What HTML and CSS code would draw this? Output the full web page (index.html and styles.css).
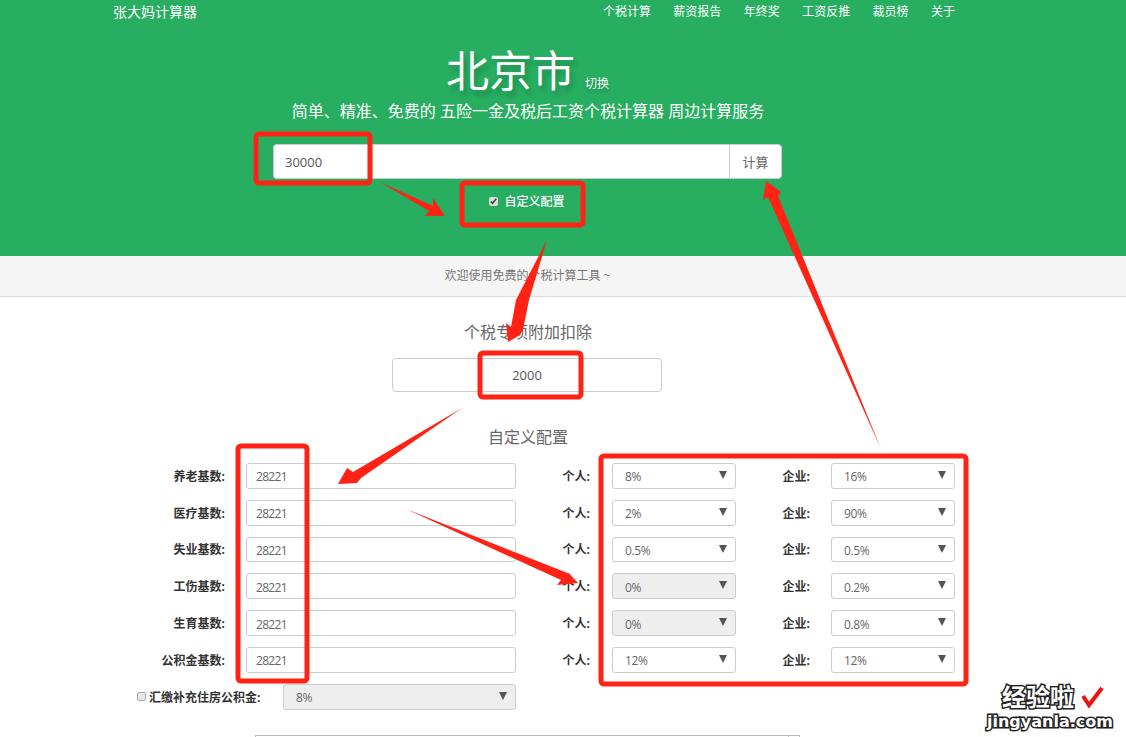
FILE: index.html
```html
<!DOCTYPE html>
<html>
<head>
    <title>张大妈计算器</title>
    <link rel="stylesheet" href="styles.css">
</head>
<body>
    <header class="hero">
        <nav class="nav">
            <a class="brand" href="#">张大妈计算器</a>
            <div class="nav-links">
                <a href="#">个税计算</a>
                <a href="#">薪资报告</a>
                <a href="#">年终奖</a>
                <a href="#">工资反推</a>
                <a href="#">裁员榜</a>
                <a href="#">关于</a>
            </div>
        </nav>
        <div class="city">
            <h1>北京市</h1>
            <a class="switch" href="#">切换</a>
        </div>
        <p class="slogan">简单、精准、免费的 五险一金及税后工资个税计算器 周边计算服务</p>
        <form class="salary">
            <input type="text" value="30000">
            <button type="button">计算</button>
        </form>
        <label class="custom"><input type="checkbox" checked> 自定义配置</label>
    </header>

    <div class="notice">欢迎使用免费的个税计算工具 ~</div>

    <main class="config">
        <h2>个税专项附加扣除</h2>
        <input class="deduct" type="text" value="2000">
        <h2 class="config-title">自定义配置</h2>

        <div class="rows">
            <label>养老基数:</label>
            <input type="text" value="28221">
            <label class="own">个人:</label>
            <div class="sel"><select><option>8%</option></select></div>
            <label>企业:</label>
            <div class="sel"><select><option>16%</option></select></div>

            <label>医疗基数:</label>
            <input type="text" value="28221">
            <label class="own">个人:</label>
            <div class="sel"><select><option>2%</option></select></div>
            <label>企业:</label>
            <div class="sel"><select><option>90%</option></select></div>

            <label>失业基数:</label>
            <input type="text" value="28221">
            <label class="own">个人:</label>
            <div class="sel"><select><option>0.5%</option></select></div>
            <label>企业:</label>
            <div class="sel"><select><option>0.5%</option></select></div>

            <label>工伤基数:</label>
            <input type="text" value="28221">
            <label class="own">个人:</label>
            <div class="sel"><select disabled><option>0%</option></select></div>
            <label>企业:</label>
            <div class="sel"><select><option>0.2%</option></select></div>

            <label>生育基数:</label>
            <input type="text" value="28221">
            <label class="own">个人:</label>
            <div class="sel"><select disabled><option>0%</option></select></div>
            <label>企业:</label>
            <div class="sel"><select><option>0.8%</option></select></div>

            <label>公积金基数:</label>
            <input type="text" value="28221">
            <label class="own">个人:</label>
            <div class="sel"><select><option>12%</option></select></div>
            <label>企业:</label>
            <div class="sel"><select><option>12%</option></select></div>
        </div>

        <div class="extra">
            <label><input type="checkbox"> 汇缴补充住房公积金:</label>
            <div class="sel"><select disabled><option>8%</option></select></div>
        </div>

        <div class="next">
            <span class="next-input"></span>
            <span class="next-btn"></span>
        </div>
    </main>

    <!-- red marks drawn on top of the screenshot -->
    <svg class="marks" width="1126" height="737" viewBox="0 0 1126 737">
        <g class="box">
            <rect x="256" y="134" width="114" height="49" rx="3"/>
            <rect x="462" y="183" width="121" height="42" rx="3"/>
            <rect x="480" y="353" width="101" height="44" rx="3"/>
            <rect x="238" y="446" width="69" height="235" rx="3"/>
            <rect x="601" y="456" width="365" height="228" rx="3"/>
        </g>
        <g class="arrow">
            <polygon points="380,182 433,206 433,198 445,216 425,216 429,211"/>
            <polygon points="547,240 529,300 523,330 520,335 508,342 506,323 511,327 516,300"/>
            <polygon points="462,408 361,478 357,483 338,484 347,468 353,472"/>
            <polygon points="406,509 570,574 564,568 578,583 557,585 561,580"/>
            <polygon points="881,449 778,196 781,192 766,181 763,200 768,197"/>
        </g>
    </svg>

    <div class="stamp">
        <div class="stamp-top">
            <span>经验啦</span>
            <svg width="24" height="24" viewBox="0 0 24 24"><polyline points="2,11 8,20 21,3" fill="none" stroke="#f01010" stroke-width="4"/></svg>
        </div>
        <div class="stamp-url">jingyanla.com</div>
    </div>
</body>
</html>
```

FILE: styles.css
```css
* {
    box-sizing: border-box;
}

html, body {
    height: 737px;
    overflow: hidden;
}

body {
    margin: 0;
    position: relative;
    background-color: #fff;
    color: #333;
    font-family: "Open Sans", "Noto Sans CJK SC", sans-serif;
    font-size: 12px;
}

a {
    color: inherit;
    text-decoration: none;
}

input, select, button {
    font-family: inherit;
}

.hero {
    height: 256px;
    background-color: #27ae60;
    color: #fff;
    text-align: center;
}

.nav {
    display: flex;
    justify-content: space-between;
    height: 24px;
    padding: 3px 171px 0 113px;
    line-height: 18px;
}

.brand {
    font-size: 14px;
}

.nav-links {
    display: flex;
    gap: 22.4px;
}

.city {
    display: flex;
    justify-content: center;
    align-items: flex-end;
    gap: 10px;
    height: 52px;
    margin-top: 21px;
    padding-right: 71px;
}

.city h1 {
    margin: 0;
    font-size: 43px;
    font-weight: 400;
    line-height: 52px;
    text-shadow: 3px 5px 5px rgba(0, 0, 0, 0.2);
}

.switch {
    font-size: 12px;
    line-height: 18px;
    margin-bottom: 4px;
    text-shadow: 0 3px 3px rgba(0, 0, 0, 0.2);
}

.slogan {
    margin: 2px 0 0;
    padding-right: 70px;
    font-size: 16px;
    line-height: 24px;
}

.salary {
    display: flex;
    width: 509px;
    height: 35px;
    margin: 21px 0 0 273px;
}

.salary input {
    flex: 1;
    min-width: 0;
    padding: 0 11px;
    border: 1px solid #ccc;
    border-right: 0;
    border-radius: 4px 0 0 4px;
    color: #555;
    font-size: 13px;
}

.salary button {
    width: 53px;
    padding: 0;
    border: 1px solid #ccc;
    border-radius: 0 4px 4px 0;
    background-color: #fff;
    color: #666;
    font-size: 13px;
}

.custom {
    display: flex;
    justify-content: center;
    align-items: center;
    gap: 6px;
    margin-top: 14px;
    padding-right: 72px;
    font-weight: 500;
    line-height: 18px;
}

.custom input {
    width: 9px;
    height: 9px;
    margin: 0 0 2px;
    accent-color: #ddd;
}

.notice {
    height: 41px;
    padding-right: 71px;
    border-bottom: 1px solid #ddd;
    background-color: #f5f5f5;
    color: #777;
    line-height: 40px;
    text-align: center;
}

.config h2 {
    margin: 24px 0 0;
    padding-right: 70px;
    color: #666;
    font-size: 16px;
    font-weight: 400;
    line-height: 22px;
    text-align: center;
}

.config .config-title {
    margin-top: 34px;
}

.deduct {
    display: block;
    width: 270px;
    height: 34px;
    margin: 15px 0 0 392px;
    border: 1px solid #ccc;
    border-radius: 4px;
    color: #555;
    font-size: 13px;
    text-align: center;
}

.rows {
    display: grid;
    grid-template-columns: 225px 270px 54px 124px 53px 124px;
    grid-auto-rows: 25.8px;
    column-gap: 21px;
    row-gap: 11px;
    align-items: center;
    margin-top: 15px;
}

.rows label {
    font-weight: 700;
    text-align: right;
}

.rows .own {
    padding-right: 1px;
}

.rows input {
    width: 100%;
    height: 100%;
    padding: 2px 9px 0;
    border: 1px solid #ccc;
    border-radius: 3px;
    color: #666;
    font-size: 12px;
    letter-spacing: -0.7px;
}

.sel {
    position: relative;
    height: 100%;
}

.sel select {
    display: block;
    width: 100%;
    height: 100%;
    padding: 2px 0 0 12px;
    border: 1px solid #ccc;
    border-radius: 3px;
    background-color: #fff;
    color: #666;
    font-size: 12px;
    letter-spacing: -0.4px;
    appearance: none;
    opacity: 1;
}

.sel select:disabled {
    background-color: #eee;
}

.sel::after {
    content: "";
    position: absolute;
    top: 8px;
    right: 9px;
    border-top: 8px solid #555;
    border-left: 4px solid transparent;
    border-right: 4px solid transparent;
}

.extra {
    display: flex;
    align-items: center;
    height: 26px;
    margin: 11px 0 0 137px;
}

.extra label {
    display: flex;
    align-items: center;
    gap: 3px;
    width: 146px;
    font-weight: 700;
}

.extra input {
    width: 9px;
    height: 9px;
    margin: 0;
    border: 1px solid #aaa;
    border-radius: 2px;
    background-color: #e6e6e6;
    appearance: none;
}

.extra .sel {
    width: 233px;
}

.next {
    display: flex;
    width: 545px;
    height: 30px;
    margin: 25px 0 0 255px;
}

.next-input {
    flex: 1;
    border: 1px solid #bbb;
    border-right: 0;
}

.next-btn {
    width: 12px;
    border: 1px solid #bbb;
}

.marks {
    position: absolute;
    top: 0;
    left: 0;
}

.marks .box rect {
    fill: none;
    stroke: #ff2215;
    stroke-width: 5;
}

.marks .arrow polygon {
    fill: #ff2215;
}

.stamp {
    position: absolute;
    top: 684px;
    left: 987px;
    width: 130px;
    color: #fff;
    font-weight: 700;
    -webkit-text-stroke: 3px #222;
    paint-order: stroke fill;
}

.stamp-top {
    display: flex;
    align-items: center;
    gap: 7px;
    padding-left: 15px;
    height: 26px;
    font-size: 24px;
    line-height: 26px;
}

.stamp-url {
    font-family: "DejaVu Sans", sans-serif;
    font-size: 16px;
    line-height: 22px;
    margin-top: 1px;
}
```
